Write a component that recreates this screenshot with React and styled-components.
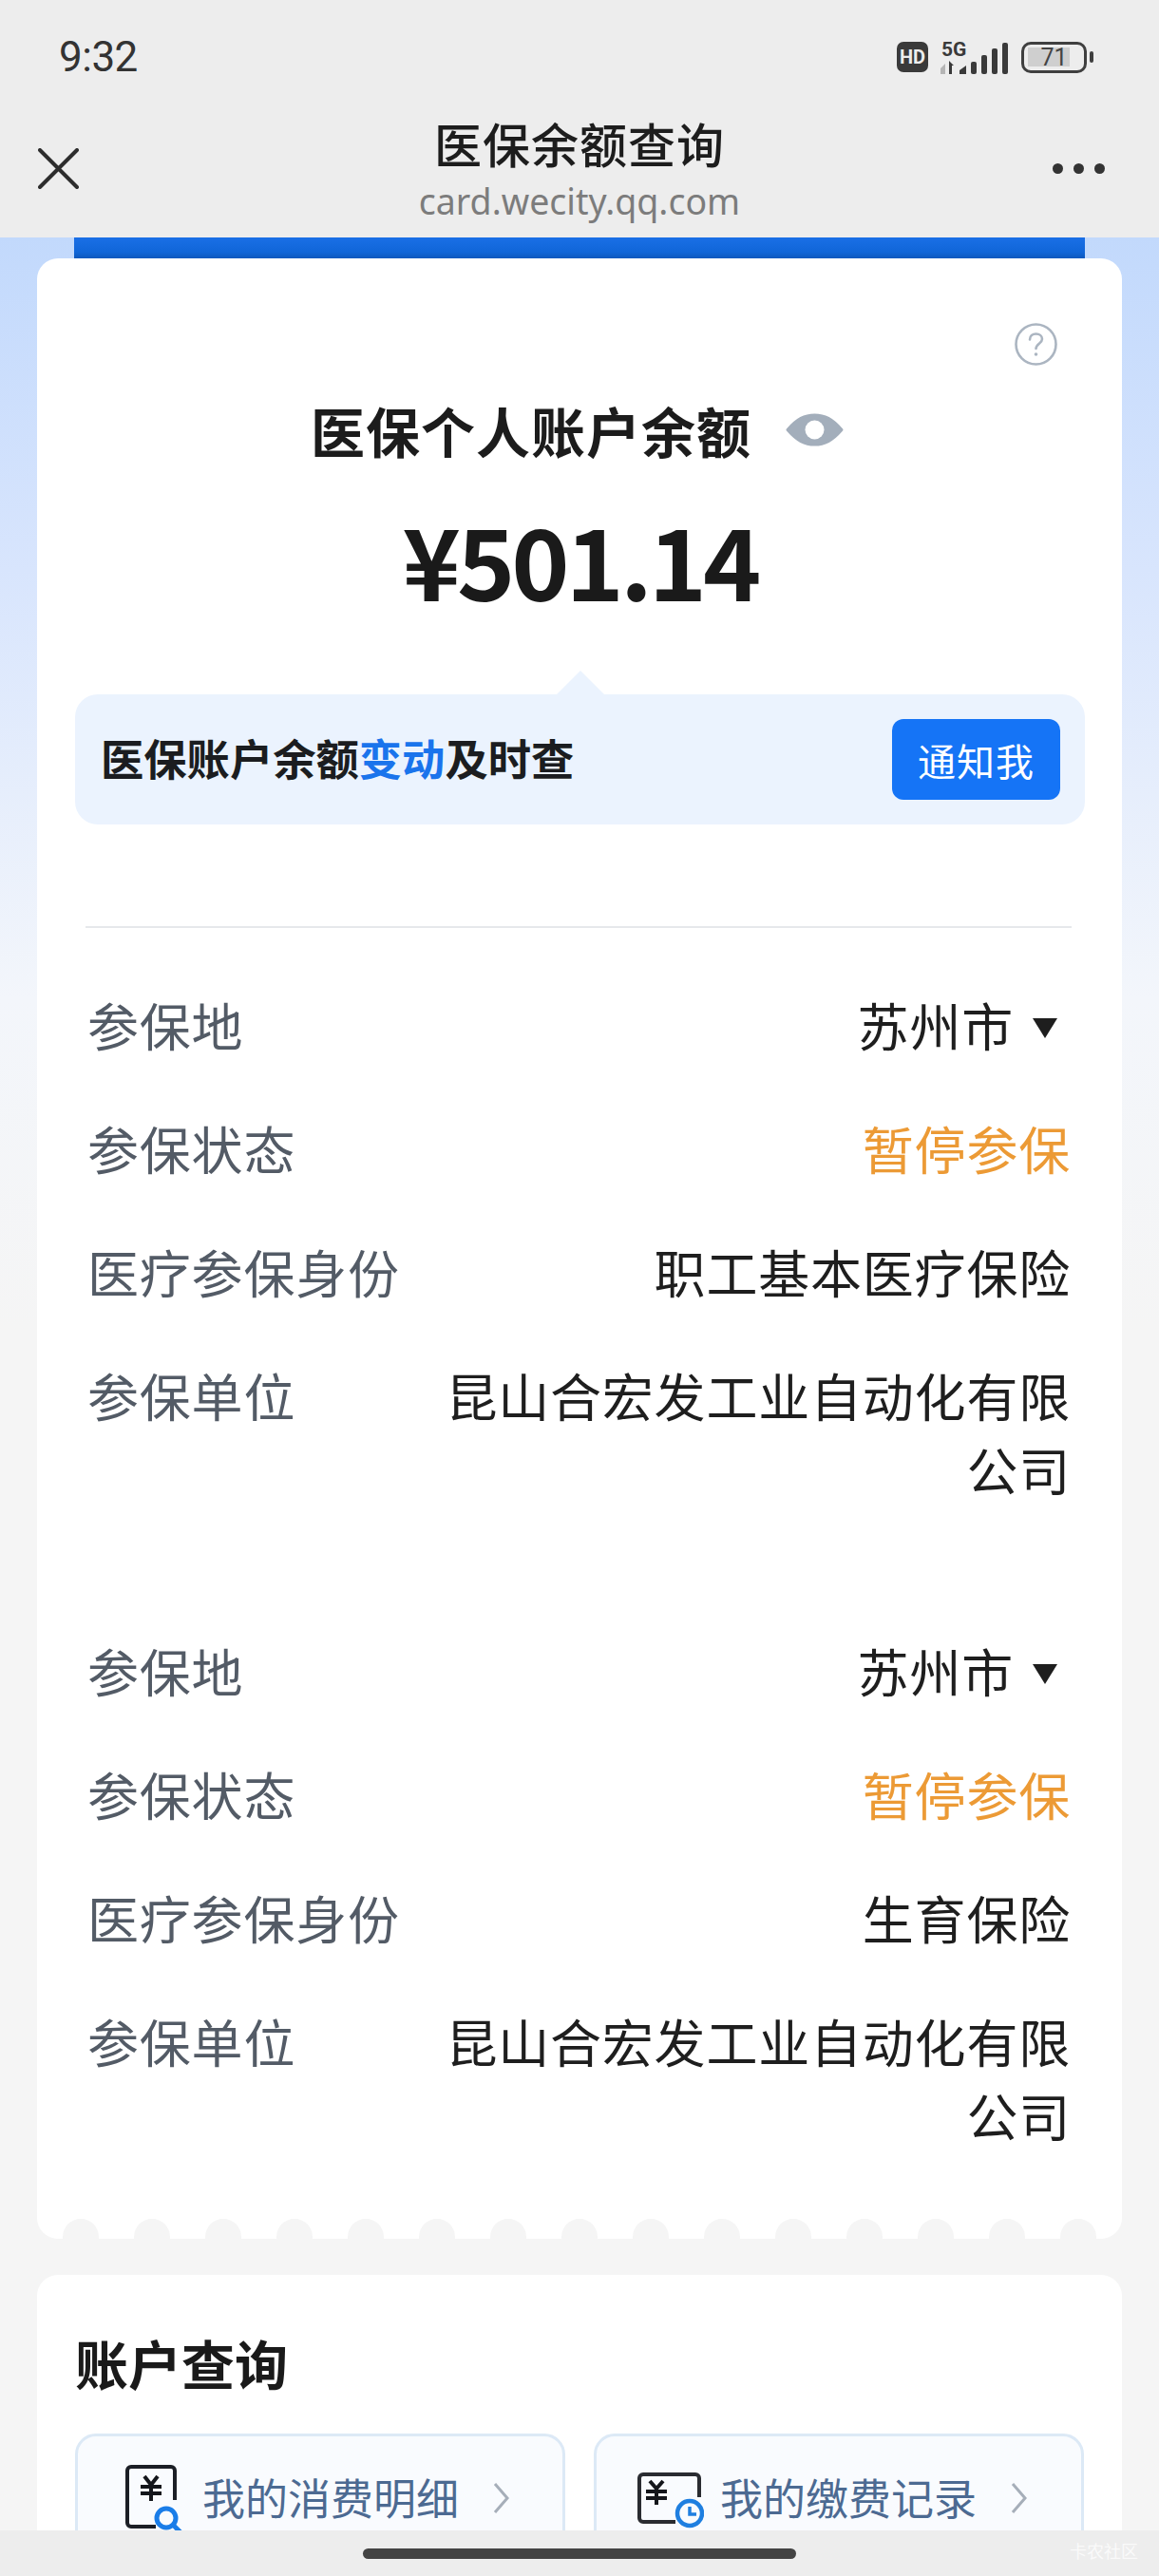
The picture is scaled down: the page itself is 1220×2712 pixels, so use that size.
import React from 'react';
import styled, { createGlobalStyle } from 'styled-components';

const GlobalStyle = createGlobalStyle`
  html, body {
    margin: 0;
    padding: 0;
    background: #f5f5f5;
  }
  * {
    box-sizing: border-box;
  }
`;

const cjk = `"Noto Sans CJK SC", "Noto Sans", sans-serif`;

const Page = styled.div`
  position: relative;
  width: 1220px;
  height: 2712px;
  overflow: hidden;
  font-family: ${cjk};
  background: linear-gradient(180deg, #c2d9fc 250px, #d8e5fd 600px, #f3f6fb 1050px, #f5f5f5 1400px);
`;

const TopArea = styled.header`
  background: #ededed;
`;

const StatusBar = styled.div`
  height: 120px;
  display: flex;
  align-items: center;
  justify-content: space-between;
  padding: 0 76px 0 62px;
`;

const Clock = styled.span`
  font-family: Roboto, sans-serif;
  font-size: 44px;
  color: #333;
  letter-spacing: -0.5px;
`;

const StatusIcons = styled.div`
  display: flex;
  align-items: center;
  gap: 11px;
`;

const HdBadge = styled.span`
  width: 33px;
  height: 32px;
  border-radius: 7px;
  background: #3a3a3a;
  color: #ededed;
  display: flex;
  align-items: center;
  justify-content: center;
  font-family: Roboto, sans-serif;
  font-weight: 700;
  font-size: 20px;
`;

const Battery = styled.span`
  position: relative;
  width: 69px;
  height: 33px;
  border: 3.5px solid #3f3f3f;
  border-radius: 10px;
  display: flex;
  align-items: center;
  justify-content: center;
  font-family: Roboto, sans-serif;
  font-size: 25px;
  color: #444;
  background: linear-gradient(#cfcfcf, #cfcfcf) no-repeat 4px center / 44px 20px;

  &::after {
    content: '';
    position: absolute;
    right: -10px;
    top: 7px;
    width: 4px;
    height: 12px;
    border-radius: 2px;
    background: #3f3f3f;
  }
`;

const NavBar = styled.div`
  height: 130px;
  display: grid;
  grid-template-columns: 1fr auto 1fr;
  align-items: start;
  padding: 0 40px;
`;

const NavTitle = styled.div`
  text-align: center;
`;

const NavHeading = styled.div`
  font-size: 50px;
  line-height: 60px;
  font-weight: 500;
  color: #1d1d1d;
  letter-spacing: 1px;
`;

const NavUrl = styled.div`
  margin-top: 3px;
  font-family: "Noto Sans", sans-serif;
  font-size: 37.500px;
  line-height: 58px;
  color: #7c7c7c;
`;

const CloseIcon = styled.svg`
  margin-top: 36px;
`;

const MoreDots = styled.div`
  justify-self: end;
  display: flex;
  gap: 11px;
  margin: 52px 17px 0 0;
`;

const Dot = styled.i`
  width: 11px;
  height: 11px;
  border-radius: 50%;
  background: #333;
`;

const BlueStrip = styled.div`
  height: 22px;
  margin: 0 78px;
  background: linear-gradient(180deg, #1a6fe6 0%, #1066d8 70%, #0c58bd 100%);
`;

const BalanceCard = styled.section`
  position: relative;
  margin: 0 39px;
  height: 2085px;
  padding: 68px 39px 0 40px;
  background: #fff;
  border-radius: 22px;
`;

const HelpRow = styled.div`
  display: flex;
  justify-content: flex-end;
  padding-right: 29px;
  height: 45px;
`;

const BalanceTitle = styled.div`
  margin-top: 37px;
  display: flex;
  align-items: center;
  justify-content: center;
  gap: 36px;
  height: 60px;
  padding-right: 6px;
  font-size: 57px;
  font-weight: 700;
  letter-spacing: 1px;
  color: #1c1c1c;
`;

const Amount = styled.div`
  margin-top: 51px;
  text-align: center;
  font-size: 104px;
  line-height: 110px;
  font-weight: 700;
  letter-spacing: -4px;
  color: #1a1a1a;
`;

const NoticeBanner = styled.div`
  position: relative;
  margin-top: 88px;
  height: 137px;
  border-radius: 24px;
  background: #ebf3fe;
  display: flex;
  align-items: center;
  justify-content: space-between;
  padding: 0 26px 0 27px;

  &::before {
    content: '';
    position: absolute;
    top: -25px;
    left: 50%;
    margin-left: -25px;
    border-left: 25px solid transparent;
    border-right: 25px solid transparent;
    border-bottom: 25px solid #ebf3fe;
  }
`;

const NoticeText = styled.div`
  font-size: 45.300px;
  line-height: 60px;
  padding-bottom: 5px;
  font-weight: 700;
  color: #1b1d20;
`;

const NoticeHighlight = styled.span`
  color: #1a74ec;
`;

const NotifyButton = styled.button`
  width: 177px;
  height: 85px;
  border: 0;
  border-radius: 12px;
  background: #1574f6;
  color: #fff;
  font-family: ${cjk};
  font-size: 40px;
  letter-spacing: 1px;
  padding: 0;
`;

const Divider = styled.div`
  margin: 107px 14px 63px 11px;
  height: 2px;
  background: #e6e8eb;
`;

const InfoBlock = styled.div`
  margin: 0 15px 0 13px;
  & + & {
    margin-top: 134px;
  }
`;

const InfoRow = styled.div`
  display: flex;
  justify-content: space-between;
  align-items: flex-start;
  font-size: 54px;
  line-height: 78px;
  letter-spacing: 0.8px;
  & + & {
    margin-top: 52px;
  }
`;

const InfoLabel = styled.div`
  flex: none;
  color: #535b66;
`;

const InfoValue = styled.div`
  width: 664px;
  text-align: right;
  color: ${(p) => p.$color || '#1e1e1e'};
`;

const Caret = styled.span`
  display: inline-block;
  margin: 0 14px 10px 20px;
  vertical-align: middle;
  border-left: 13.500px solid transparent;
  border-right: 13.500px solid transparent;
  border-top: 21px solid #1e1e1e;
`;

const Scallops = styled.div`
  position: absolute;
  left: 0;
  right: 0;
  bottom: 0;
  display: flex;
  justify-content: space-between;
  padding: 0 27px;
`;

const Scallop = styled.i`
  width: 38px;
  height: 21px;
  border-radius: 19px 19px 0 0;
  background: #f5f5f5;
`;

const QueryCard = styled.section`
  margin: 38px 39px 0;
  height: 400px;
  padding: 57px 39px 0 40px;
  background: #fff;
  border-radius: 22px;
`;

const QueryTitle = styled.h2`
  margin: 0 0 40px;
  font-size: 56px;
  line-height: 70px;
  font-weight: 700;
  color: #1a1a1a;
`;

const TileGrid = styled.div`
  display: grid;
  grid-template-columns: 516px 516px;
  gap: 30px;
`;

const Tile = styled.div`
  height: 136px;
  border: 3px solid #dce9f6;
  border-radius: 22px;
  background: #f9fbfe;
  display: flex;
  align-items: center;
  padding-left: ${(p) => p.$pad}px;
`;

const TileText = styled.span`
  margin-left: ${(p) => p.$gap}px;
  padding-bottom: 3px;
  font-size: 45px;
  color: #4c6a92;
  white-space: nowrap;
`;

const Chevron = styled.svg`
  margin-left: 36px;
  flex: none;
`;

const BottomBar = styled.div`
  position: absolute;
  left: 0;
  right: 0;
  bottom: 0;
  height: 48px;
  background: #ededed;
  display: flex;
  justify-content: center;
  padding-top: 19px;
`;

const HomePill = styled.div`
  width: 456px;
  height: 11px;
  border-radius: 6px;
  background: #434343;
`;

const Watermark = styled.span`
  position: absolute;
  right: 22px;
  top: 8px;
  font-size: 18px;
  color: rgba(255, 255, 255, 0.75);
`;

const info = [
  { status: '职工基本医疗保险' },
  { status: '生育保险' },
];

const SignalIcon = () => (
  <svg width="76" height="38" viewBox="988 40 76 38">
    <text x="991" y="58" fontFamily="Roboto, sans-serif" fontWeight="700" fontSize="21" fill="#3a3a3a">5G</text>
    <path d="M990 71l5-5v11h-5z" fill="#b5b5b5" />
    <path d="M999 63l5 5h-2v9h-3z" fill="#3a3a3a" />
    <path d="M1010 73l7-5v9h-7z" fill="#3a3a3a" />
    <rect x="1022" y="64" width="6" height="13" rx="2" fill="#3a3a3a" />
    <rect x="1033" y="57" width="6" height="20" rx="2" fill="#3a3a3a" />
    <rect x="1044" y="50" width="6" height="27" rx="2" fill="#3a3a3a" />
    <rect x="1055" y="44" width="6" height="33" rx="2" fill="#3a3a3a" />
  </svg>
);

const HelpIcon = () => (
  <svg width="45" height="45" viewBox="0 0 45 45" fill="none">
    <circle cx="22.5" cy="22.5" r="21" stroke="#abb5c1" strokeWidth="2.6" />
    <path d="M16 17.5c0-3.8 3-6 6.500-6s6.500 2.200 6.500 5.500c0 4.500-6.500 5-6.500 10" stroke="#abb5c1" strokeWidth="2.6" strokeLinecap="round" />
    <circle cx="22.500" cy="33" r="1.800" fill="#abb5c1" />
  </svg>
);

const EyeIcon = () => (
  <svg width="61" height="35" viewBox="0 0 61 35">
    <path d="M2 17.500C12 6 20 2 30.500 2S49 6 59 17.500C49 29 41 33 30.500 33S12 29 2 17.500z" fill="#a3aebb" stroke="#a3aebb" strokeWidth="3" strokeLinejoin="round" />
    <circle cx="30.500" cy="17.500" r="10" fill="#fff" />
  </svg>
);

const ReceiptIcon = () => (
  <svg width="62" height="72" viewBox="0 0 62 72" fill="none" style={{ flex: 'none' }}>
    <path d="M53 38V7a4 4 0 0 0-4-4H7a4 4 0 0 0-4 4v55a4 4 0 0 0 4 4h26" stroke="#1c1f26" strokeWidth="4" />
    <path d="M21 13l7 9 7-9M17 24h22M17 31h22M28 22v17" stroke="#14161b" strokeWidth="4" />
    <circle cx="44" cy="57" r="10" stroke="#1a7de8" strokeWidth="5" />
    <path d="M51 64l8 8" stroke="#1a7de8" strokeWidth="5" />
  </svg>
);

const RecordIcon = () => (
  <svg width="72" height="66" viewBox="0 0 72 66" fill="none" style={{ flex: 'none' }}>
    <path d="M67 32V12a4 4 0 0 0-4-4H8a4 4 0 0 0-4 4v42a4 4 0 0 0 4 4h34" stroke="#2a2c31" strokeWidth="4" />
    <path d="M15 15l7 8 7-8M11 26h22M11 33h22M22 23v17" stroke="#14161b" strokeWidth="4" />
    <circle cx="57" cy="49" r="13" stroke="#1f7fe0" strokeWidth="4.500" fill="#f9fbfe" />
    <path d="M57 42v8h7" stroke="#1f7fe0" strokeWidth="3.500" />
  </svg>
);

const ChevronIcon = () => (
  <Chevron width="18" height="34" viewBox="0 0 18 34" fill="none">
    <path d="M2 2l13 15L2 32" stroke="#a6aeb9" strokeWidth="3" />
  </Chevron>
);

export default function App() {
  return (
    <Page>
      <GlobalStyle />
      <TopArea>
        <StatusBar>
          <Clock>9:32</Clock>
          <StatusIcons>
            <HdBadge>HD</HdBadge>
            <SignalIcon />
            <Battery>71</Battery>
          </StatusIcons>
        </StatusBar>
        <NavBar>
          <CloseIcon width="43" height="43" viewBox="0 0 43 43" fill="none">
            <path d="M2 2l39 39M41 2L2 41" stroke="#2d2d2d" strokeWidth="4" strokeLinecap="round" />
          </CloseIcon>
          <NavTitle>
            <NavHeading>医保余额查询</NavHeading>
            <NavUrl>card.wecity.qq.com</NavUrl>
          </NavTitle>
          <MoreDots>
            <Dot />
            <Dot />
            <Dot />
          </MoreDots>
        </NavBar>
      </TopArea>
      <BlueStrip />
      <BalanceCard>
        <HelpRow>
          <HelpIcon />
        </HelpRow>
        <BalanceTitle>
          <span>医保个人账户余额</span>
          <EyeIcon />
        </BalanceTitle>
        <Amount>¥501.14</Amount>
        <NoticeBanner>
          <NoticeText>
            医保账户余额<NoticeHighlight>变动</NoticeHighlight>及时查
          </NoticeText>
          <NotifyButton>通知我</NotifyButton>
        </NoticeBanner>
        <Divider />
        {info.map((item) => (
          <InfoBlock key={item.status}>
            <InfoRow>
              <InfoLabel>参保地</InfoLabel>
              <InfoValue>
                苏州市
                <Caret />
              </InfoValue>
            </InfoRow>
            <InfoRow>
              <InfoLabel>参保状态</InfoLabel>
              <InfoValue $color="#ec9a35">暂停参保</InfoValue>
            </InfoRow>
            <InfoRow>
              <InfoLabel>医疗参保身份</InfoLabel>
              <InfoValue>{item.status}</InfoValue>
            </InfoRow>
            <InfoRow>
              <InfoLabel>参保单位</InfoLabel>
              <InfoValue>昆山合宏发工业自动化有限公司</InfoValue>
            </InfoRow>
          </InfoBlock>
        ))}
        <Scallops>
          {Array.from({ length: 15 }, (_, i) => (
            <Scallop key={i} />
          ))}
        </Scallops>
      </BalanceCard>
      <QueryCard>
        <QueryTitle>账户查询</QueryTitle>
        <TileGrid>
          <Tile $pad={49}>
            <ReceiptIcon />
            <TileText $gap={20}>我的消费明细</TileText>
            <ChevronIcon />
          </Tile>
          <Tile $pad={41}>
            <RecordIcon />
            <TileText $gap={17}>我的缴费记录</TileText>
            <ChevronIcon />
          </Tile>
        </TileGrid>
      </QueryCard>
      <BottomBar>
        <HomePill />
        <Watermark>卡农社区</Watermark>
      </BottomBar>
    </Page>
  );
}
